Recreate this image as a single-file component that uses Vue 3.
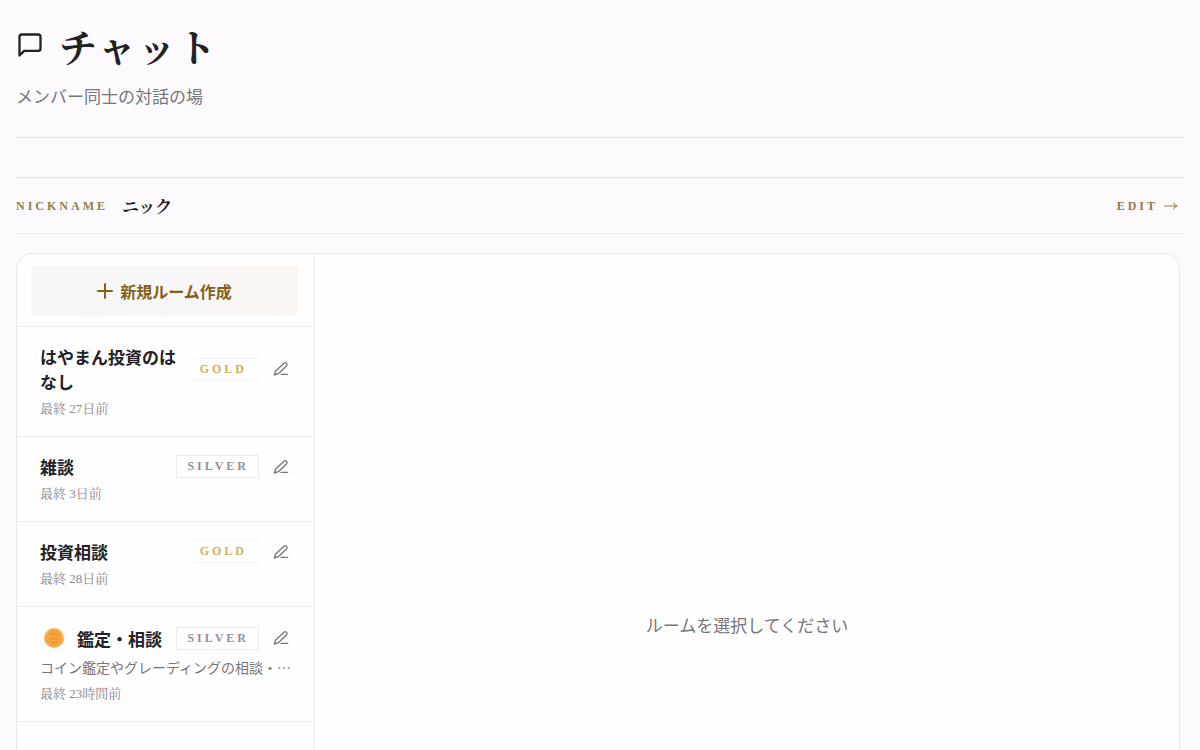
<script setup>
const rooms = [
  { id: 1, name: 'はやまん投資のはなし', tier: 'gold', last: '最終 27日前' },
  { id: 2, name: '雑談', tier: 'silver', last: '最終 3日前' },
  { id: 3, name: '投資相談', tier: 'gold', last: '最終 28日前' },
  { id: 4, name: '鑑定・相談', tier: 'silver', last: '最終 23時間前', coin: true, about: 'コイン鑑定やグレーディングの相談・…' },
]
</script>

<template>
  <main class="page">
    <header class="head">
      <div class="head-row">
        <svg class="bubble" viewBox="0 0 24 24" aria-hidden="true">
          <path d="M21 15a2 2 0 0 1-2 2H7l-4 4V5a2 2 0 0 1 2-2h14a2 2 0 0 1 2 2z" />
        </svg>
        <h1>チャット</h1>
      </div>
      <p class="sub">メンバー同士の対話の場</p>
    </header>

    <section class="nick">
      <span class="nick-label">NICKNAME</span>
      <span class="nick-name">ニック</span>
      <button type="button" class="edit">
        EDIT
        <svg viewBox="0 0 14 10" aria-hidden="true"><path d="M0.5 5H13M9.5 2Q10.500 4.500 13 5Q10.500 5.500 9.500 8" /></svg>
      </button>
    </section>

    <section class="chat">
      <aside class="side">
        <div class="create">
          <button type="button" class="new">
            <svg viewBox="0 0 16 16" aria-hidden="true"><path d="M8 1v14M1 8h14" /></svg>
            新規ルーム作成
          </button>
        </div>
        <ul class="rooms">
          <li v-for="room in rooms" :key="room.id" class="room">
            <div class="room-top">
              <h2 class="room-name">
                <svg v-if="room.coin" class="coin" viewBox="0 0 28 28" aria-hidden="true">
                  <circle cx="14" cy="14" r="10" fill="#f7b452" />
                  <circle cx="14" cy="14" r="8" fill="#f4a43d" />
                  <path d="M10 11q4-3 7 0M10 15h8M11 18q4 2 6-1" fill="none" stroke="#e18c2c" stroke-width="1" />
                </svg>
                <span>{{ room.name }}</span>
              </h2>
              <span class="tier" :class="room.tier">{{ room.tier.toUpperCase() }}</span>
              <button type="button" class="pen" :aria-label="room.name + 'を編集'">
                <svg viewBox="0 0 24 24" aria-hidden="true">
                  <path d="M12 20h10" />
                  <path d="M16.500 3.500a2.120 2.120 0 0 1 4 3.500L8 19l-6 2 2-6z" />
                </svg>
              </button>
            </div>
            <p v-if="room.about" class="about">{{ room.about }}</p>
            <p class="last">{{ room.last }}</p>
          </li>
        </ul>
      </aside>
      <div class="empty">ルームを選択してください</div>
    </section>
  </main>
</template>

<style>
body {
  margin: 0;
  background: #fcfafd;
}
</style>

<style scoped>
.page {
  padding: 16px;
  color: #222126;
  font-family: "Noto Sans CJK JP", sans-serif;
}
h1, h2, p, ul {
  margin: 0;
  padding: 0;
}
button {
  border: 0;
  padding: 0;
  background: none;
  cursor: pointer;
}
svg {
  flex: none;
}
.bubble, .edit svg, .new svg, .pen svg {
  fill: none;
  stroke: currentColor;
  stroke-linecap: round;
  stroke-linejoin: round;
}
.head {
  padding-bottom: 27px;
  border-bottom: 1px solid #e5e3e8;
}
.head-row {
  display: flex;
  align-items: center;
  gap: 15px;
}
.bubble {
  width: 28px;
  height: 28px;
  margin-bottom: 2px;
  stroke-width: 2;
}
h1 {
  font: 700 38px/60px "Noto Serif CJK JP", "Noto Sans CJK JP", serif;
  letter-spacing: 2px;
}
.sub {
  margin-top: 5px;
  font-size: 17px;
  line-height: 29px;
  color: #77767b;
}
.nick {
  display: flex;
  align-items: center;
  margin-top: 39px;
  height: 55px;
  border-top: 1px solid #e7e5ea;
  border-bottom: 1px solid #ebe9ee;
}
.nick-label {
  width: 106px;
  font: 700 12px/18px "Liberation Serif", serif;
  letter-spacing: 3px;
  color: #94803f;
}
.nick-name {
  flex: 1;
  font: 700 17px/26px "Noto Serif CJK JP", "Noto Sans CJK JP", serif;
}
.edit {
  display: flex;
  align-items: center;
  gap: 6px;
  margin-right: 6px;
  font: 700 12px/18px "Liberation Serif", serif;
  letter-spacing: 3px;
  color: #957b40;
}
.edit svg {
  width: 14px;
  height: 10px;
}
.chat {
  display: grid;
  grid-template-columns: 298px 1fr;
  box-sizing: border-box;
  min-height: calc(100vh - 8px);
  margin: 19px 4px 0 0;
  border: 1px solid #e9e7ec;
  border-radius: 16px;
  background: #fefefe;
  overflow: hidden;
}
.side {
  border-right: 2px solid #f4f2f6;
}
.create {
  padding: 12px 15px 10px 14px;
  border-bottom: 1px solid #eceaef;
}
.new {
  display: flex;
  align-items: center;
  justify-content: center;
  gap: 7px;
  width: 100%;
  height: 50px;
  border-radius: 4px;
  background: linear-gradient(100deg, #f9f8f5, #f7f6f9 40%, #fcf6f2);
  font: 700 16px/24px "Noto Sans CJK JP", sans-serif;
  color: #846117;
}
.new svg {
  width: 16px;
  height: 16px;
  stroke-width: 2;
}
.rooms {
  list-style: none;
}
.room {
  padding: 17px 24px 18px 23px;
  border-bottom: 1px solid #eceaef;
}
.room-top {
  display: flex;
  align-items: center;
}
.room-name {
  display: flex;
  align-items: center;
  gap: 9px;
  flex: 1;
  min-width: 0;
  font-size: 17px;
  font-weight: 700;
  line-height: 25px;
}
.coin {
  width: 28px;
  height: 28px;
}
.tier {
  margin-left: 12px;
  padding: 0 9px 0 10px;
  border: 1px solid #eceaee;
  font: 700 12px/21px "Liberation Serif", serif;
  letter-spacing: 3px;
}
.gold {
  padding: 0 11px 0 7px;
  border-color: #f4f4f5 #fefefe;
  color: #d2b155;
}
.silver {
  color: #929096;
}
.pen {
  display: flex;
  margin-left: 14px;
  color: #77757b;
}
.pen svg {
  width: 16px;
  height: 16px;
  stroke-width: 2;
}
.about {
  margin-top: 5px;
  font-size: 14px;
  line-height: 21px;
  color: #77757b;
  white-space: nowrap;
}
.last {
  margin-top: 5px;
  font: 400 13px/19px "Liberation Serif", "Noto Serif CJK JP", "Noto Sans CJK JP", serif;
  color: #89878d;
}
.about + .last {
  margin-top: 6px;
}
.empty {
  display: flex;
  align-items: center;
  justify-content: center;
  font-size: 17px;
  color: #77767b;
}
</style>
